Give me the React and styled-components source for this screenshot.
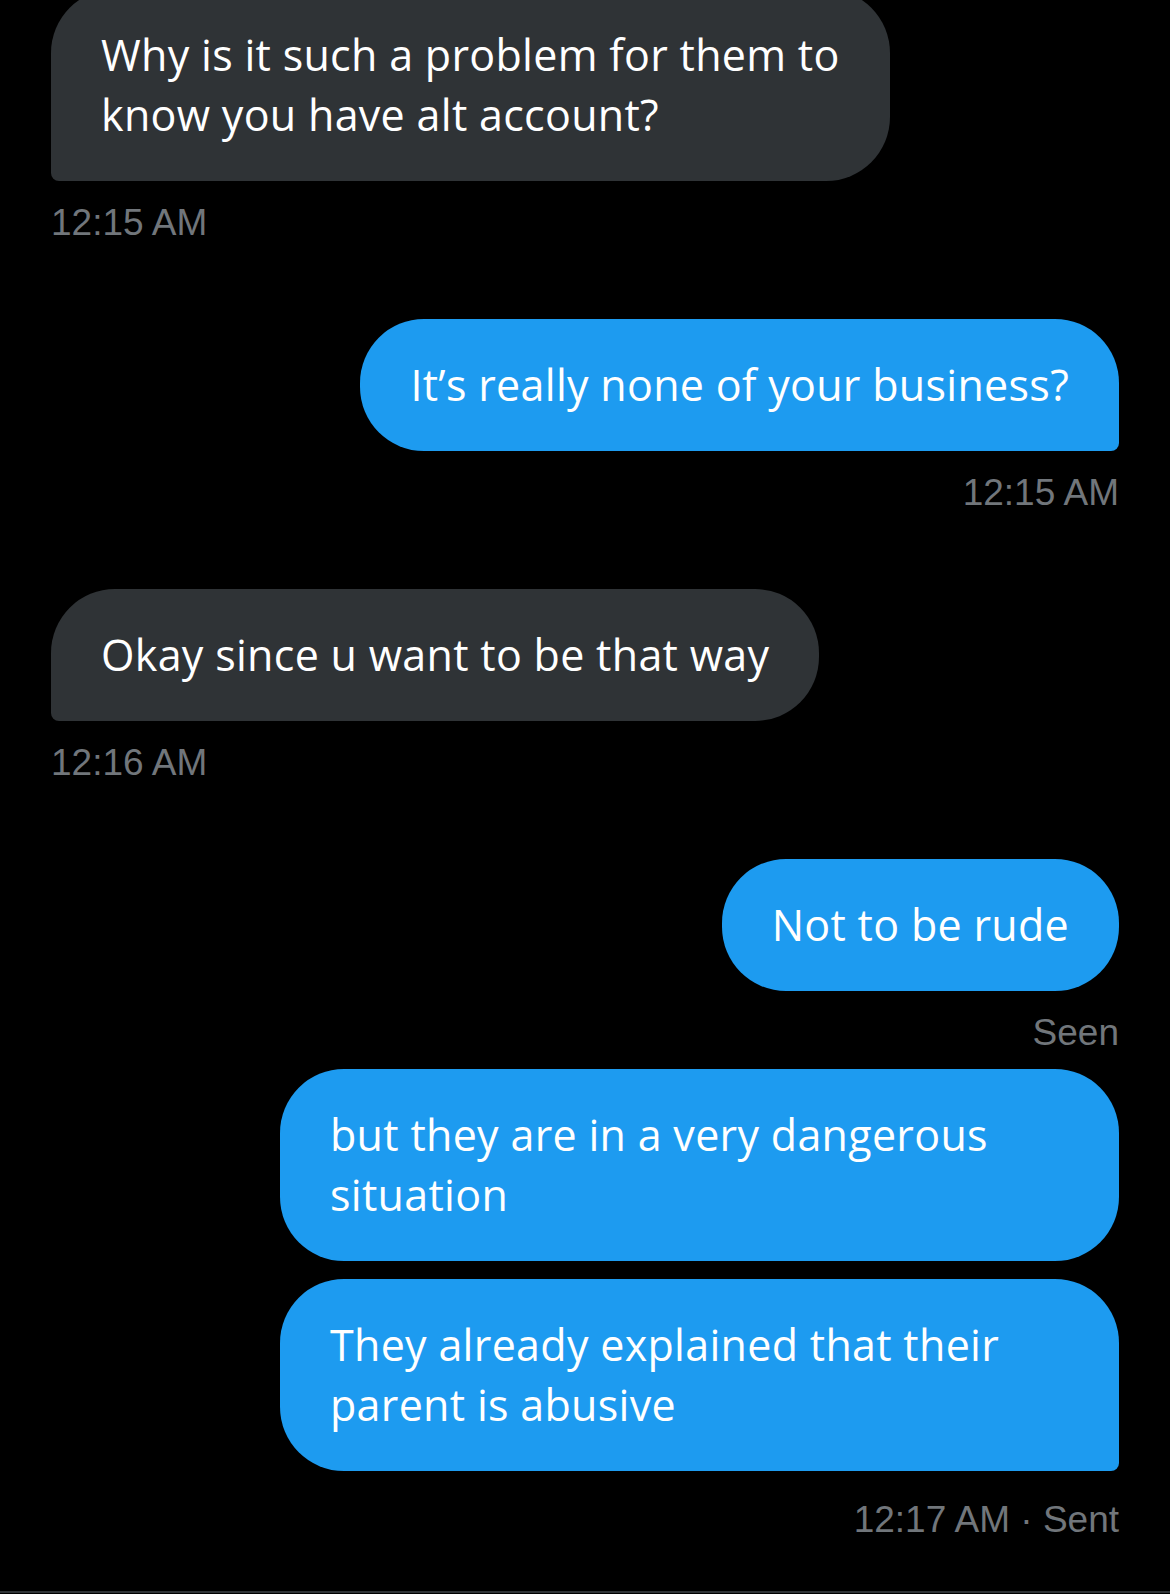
import React from 'react';
import styled, { createGlobalStyle, css } from 'styled-components';

const messages = [
  {
    id: 1,
    from: 'them',
    bubbles: ['Why is it such a problem for them to know you have alt account?'],
    meta: '12:15 AM',
  },
  {
    id: 2,
    from: 'me',
    bubbles: ['It’s really none of your business?'],
    meta: '12:15 AM',
  },
  {
    id: 3,
    from: 'them',
    bubbles: ['Okay since u want to be that way'],
    meta: '12:16 AM',
  },
  {
    id: 4,
    from: 'me',
    bubbles: ['Not to be rude'],
    meta: 'Seen',
    tight: true,
  },
  {
    id: 5,
    from: 'me',
    bubbles: [
      'but they are in a very dangerous situation',
      'They already explained that their parent is abusive',
    ],
    meta: '12:17 AM · Sent',
    last: true,
  },
];

function App() {
  return (
    <>
      <GlobalStyle />
      <Page>
        <Thread>
          {messages.map((group, gi) => {
            const mine = group.from === 'me';
            const prevTight = gi > 0 && messages[gi - 1].tight;
            return (
              <Group key={group.id} $mine={mine} $tight={prevTight}>
                {group.bubbles.map((text, i) => (
                  <Bubble
                    key={i}
                    $mine={mine}
                    $tail={i === group.bubbles.length - 1 && !group.tight}
                  >
                    {text}
                  </Bubble>
                ))}
                <Meta $last={group.last}>{group.meta}</Meta>
              </Group>
            );
          })}
        </Thread>
        <Composer />
      </Page>
    </>
  );
}

export default App;

const GlobalStyle = createGlobalStyle`
  html, body {
    margin: 0;
    padding: 0;
    background: #000;
  }
  * {
    box-sizing: border-box;
  }
`;

const Page = styled.div`
  min-height: 100vh;
  height: 100vh;
  display: flex;
  flex-direction: column;
  background: #000;
  overflow: hidden;
`;

const Thread = styled.div`
  display: flex;
  flex-direction: column;
  padding: 0 51px;
  margin-top: -11px;
`;

const Group = styled.div`
  display: flex;
  flex-direction: column;
  align-items: ${(p) => (p.$mine ? 'flex-end' : 'flex-start')};
  gap: 18px;
  margin-top: ${(p) => (p.$tight ? '14px' : '74px')};

  &:first-child {
    margin-top: 0;
  }
`;

const Bubble = styled.div`
  max-width: 839px;
  padding: 36px 50px;
  font-family: 'Open Sans', 'Noto Sans', sans-serif;
  font-size: 43px;
  line-height: 60px;
  letter-spacing: 0.3px;
  color: #fff;
  border-radius: 64px;
  background: ${(p) => (p.$mine ? '#1d9bf0' : '#2f3336')};

  ${(p) =>
    p.$tail &&
    (p.$mine
      ? css`
          border-bottom-right-radius: 8px;
        `
      : css`
          border-bottom-left-radius: 8px;
        `)}
`;

const Meta = styled.div`
  margin-top: ${(p) => (p.$last ? '9px' : '2px')};
  font-family: 'Liberation Sans', Arial, sans-serif;
  font-size: 37px;
  line-height: 44px;
  color: #71767b;
  white-space: pre;
`;

const Composer = styled.div`
  margin-top: auto;
  height: 3px;
  border-top: 2px solid #2f3336;
`;
